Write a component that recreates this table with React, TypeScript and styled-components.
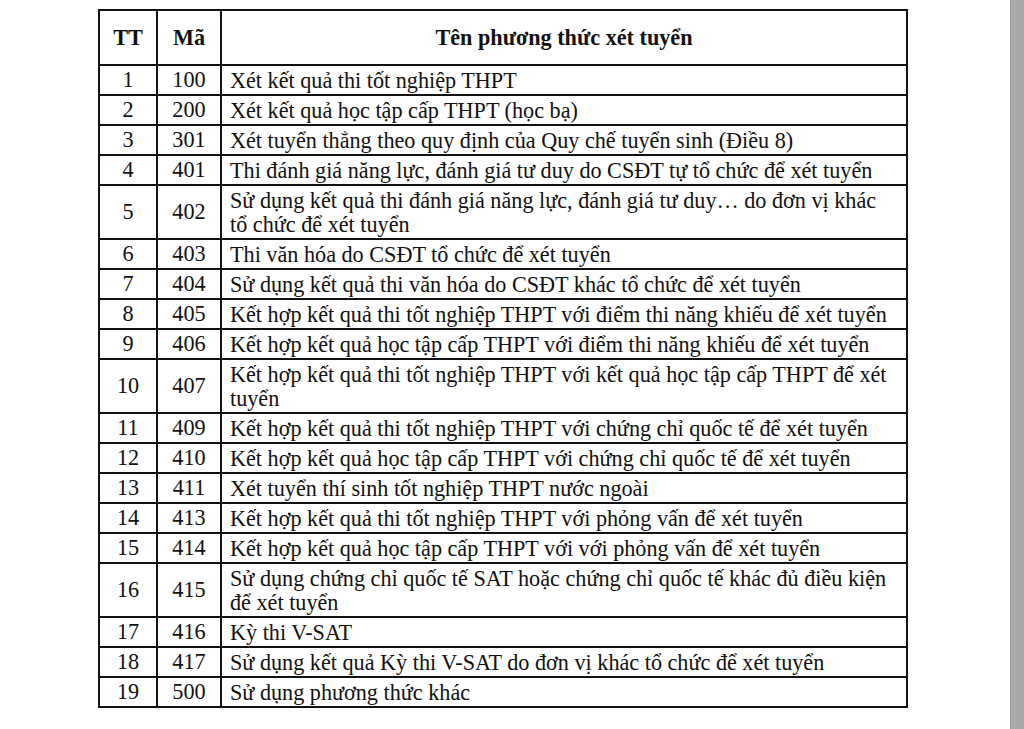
import styled, { createGlobalStyle } from 'styled-components';

const GlobalStyle = createGlobalStyle`
  html, body {
    margin: 0;
    padding: 0;
    background: #ffffff;
  }
`;

const Page = styled.div`
  display: flex;
  width: 1024px;
  height: 729px;
  overflow: hidden;
  font-family: "Liberation Serif", "Times New Roman", serif;
  color: #111;
`;

const Sheet = styled.main`
  flex: 1;
  padding: 9px 0 0 98px;
  background: #fff;
`;

const Edge = styled.div`
  width: 13px;
  background: #a9a9a9;
  border-left: 1px solid #9a9a9a;
`;

const Table = styled.table`
  border-collapse: collapse;
  width: 810px;
  table-layout: fixed;
  font-size: 22.2px;
`;

const HeadCell = styled.th<{ $w?: number }>`
  width: ${p => (p.$w ? `${p.$w}px` : 'auto')};
  height: 53px;
  border: 2px solid #111;
  font-weight: bold;
  text-align: center;
  vertical-align: middle;
  padding: 0;
`;

const Row = styled.tr<{ $tall?: boolean }>`
  height: ${p => (p.$tall ? '54px' : '30px')};
`;

const NumCell = styled.td`
  border: 2px solid #111;
  text-align: center;
  vertical-align: middle;
  padding: 0;
  line-height: 24px;
`;

const NameCell = styled.td`
  border: 2px solid #111;
  text-align: left;
  vertical-align: middle;
  padding: 1px 4px 0 8px;
  line-height: 24px;
  white-space: nowrap;
`;

const rows: [string, string, string[]][] = [
  ['1', '100', ['Xét kết quả thi tốt nghiệp THPT']],
  ['2', '200', ['Xét kết quả học tập cấp THPT (học bạ)']],
  ['3', '301', ['Xét tuyển thẳng theo quy định của Quy chế tuyển sinh (Điều 8)']],
  ['4', '401', ['Thi đánh giá năng lực, đánh giá tư duy do CSĐT tự tổ chức để xét tuyển']],
  ['5', '402', ['Sử dụng kết quả thi đánh giá năng lực, đánh giá tư duy… do đơn vị khác', 'tổ chức để xét tuyển']],
  ['6', '403', ['Thi văn hóa do CSĐT tổ chức để xét tuyển']],
  ['7', '404', ['Sử dụng kết quả thi văn hóa do CSĐT khác tổ chức để xét tuyển']],
  ['8', '405', ['Kết hợp kết quả thi tốt nghiệp THPT với điểm thi năng khiếu để xét tuyển']],
  ['9', '406', ['Kết hợp kết quả học tập cấp THPT với điểm thi năng khiếu để xét tuyển']],
  ['10', '407', ['Kết hợp kết quả thi tốt nghiệp THPT với kết quả học tập cấp THPT để xét', 'tuyển']],
  ['11', '409', ['Kết hợp kết quả thi tốt nghiệp THPT với chứng chỉ quốc tế để xét tuyển']],
  ['12', '410', ['Kết hợp kết quả học tập cấp THPT với chứng chỉ quốc tế để xét tuyển']],
  ['13', '411', ['Xét tuyển thí sinh tốt nghiệp THPT nước ngoài']],
  ['14', '413', ['Kết hợp kết quả thi tốt nghiệp THPT với phỏng vấn để xét tuyển']],
  ['15', '414', ['Kết hợp kết quả học tập cấp THPT với với phỏng vấn để xét tuyển']],
  ['16', '415', ['Sử dụng chứng chỉ quốc tế SAT hoặc chứng chỉ quốc tế khác đủ điều kiện', 'để xét tuyển']],
  ['17', '416', ['Kỳ thi V-SAT']],
  ['18', '417', ['Sử dụng kết quả Kỳ thi V-SAT do đơn vị khác tổ chức để xét tuyển']],
  ['19', '500', ['Sử dụng phương thức khác']],
];

export default function App() {
  return (
    <>
      <GlobalStyle />
      <Page>
        <Sheet>
          <Table>
            <thead>
              <tr>
                <HeadCell $w={56}>TT</HeadCell>
                <HeadCell $w={62}>Mã</HeadCell>
                <HeadCell>Tên phương thức xét tuyển</HeadCell>
              </tr>
            </thead>
            <tbody>
              {rows.map(([tt, code, lines]) => (
                <Row key={tt} $tall={lines.length > 1}>
                  <NumCell>{tt}</NumCell>
                  <NumCell>{code}</NumCell>
                  <NameCell>
                    {lines.map((l, i) => (
                      <span key={i}>
                        {i > 0 && <br />}
                        {l}
                      </span>
                    ))}
                  </NameCell>
                </Row>
              ))}
            </tbody>
          </Table>
        </Sheet>
        <Edge />
      </Page>
    </>
  );
}
